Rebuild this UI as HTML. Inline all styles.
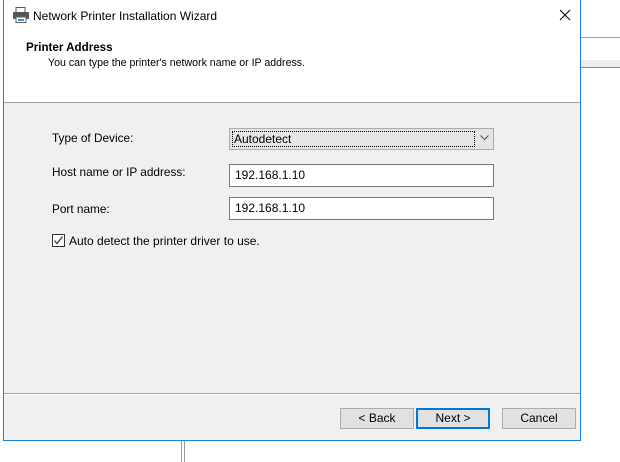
<!DOCTYPE html>
<html><head><meta charset="utf-8"><style>
*{margin:0;padding:0;box-sizing:border-box}
body{width:620px;height:462px;background:#fff;position:relative;overflow:hidden;font-family:"Liberation Sans",sans-serif;font-size:12px;color:#000}
.a{position:absolute}
.win{left:3px;top:0;width:578px;height:441px;border:1px solid #1883d7;border-top:none;background:#f0f0f0}
.btn{position:absolute;top:408px;width:74px;height:21px;background:#e1e1e1;border:1px solid #adadad;text-align:center;line-height:19px;font-size:12px}
.inp{position:absolute;left:229px;width:265px;height:23px;background:#fff;border:1px solid #7a7a7a;padding-left:5px;line-height:21px}
</style></head><body>
<div class="a" style="left:581px;top:37px;width:39px;height:1px;background:#a0a0a0"></div>
<div class="a" style="left:581px;top:60px;width:39px;height:7px;background:#eee"></div>
<div class="a" style="left:581px;top:67px;width:39px;height:1px;background:#888"></div>
<div class="a" style="left:181px;top:441px;width:4px;height:21px;border-left:1px solid #999;border-right:1px solid #999"></div>
<div class="a win"></div>
<div class="a" style="left:4px;top:0;width:576px;height:102px;background:#fff"></div>
<div class="a" style="left:4px;top:102px;width:576px;height:1px;background:#a0a0a0"></div>
<svg class="a" style="left:12px;top:7px" width="18" height="16" viewBox="0 0 18 16">
<rect x="4" y="0.5" width="9" height="5" fill="#fff" stroke="#555"/>
<rect x="1" y="5" width="16" height="7" rx="1" fill="#555"/>
<rect x="4" y="10" width="10" height="5.5" fill="#fff" stroke="#666"/>
<rect x="6" y="12" width="6" height="2" fill="#2a9ad9"/>
</svg>
<div class="a" style="left:33px;top:9px;font-size:12px">Network Printer Installation Wizard</div>
<svg class="a" style="left:559px;top:9px" width="12" height="12"><path d="M1 1L11 11M11 1L1 11" stroke="#000" stroke-width="1"/></svg>
<div class="a" style="left:26px;top:41px;font-weight:bold;font-size:11.6px">Printer Address</div>
<div class="a" style="left:48px;top:57px;font-size:10.6px">You can type the printer's network name or IP address.</div>
<div class="a" style="left:52px;top:131px;font-size:11.8px">Type of Device:</div>
<div class="a" style="left:52px;top:165px;font-size:11.8px">Host name or IP address:</div>
<div class="a" style="left:52px;top:202px;font-size:11.8px">Port name:</div>
<div class="a" style="left:229px;top:128px;width:265px;height:22px;background:#e5e5e5;border:1px solid #acacac"></div>
<div class="a" style="left:232px;top:131px;width:243px;height:16px;border:1px dotted #000;padding-left:1px;line-height:14px">Autodetect</div>
<svg class="a" style="left:480px;top:135px" width="9" height="6"><path d="M0.5 0.5L4.5 4.5L8.5 0.5" stroke="#555" fill="none"/></svg>
<div class="inp" style="top:164px">192.168.1.10</div>
<div class="inp" style="top:197px">192.168.1.10</div>
<div class="a" style="left:52px;top:234px;width:13px;height:13px;background:#fff;border:1px solid #333"></div>
<svg class="a" style="left:53px;top:235px" width="11" height="11"><path d="M1.5 5.5L4 8.5L9.5 1.5" stroke="#333" fill="none" stroke-width="1.2"/></svg>
<div class="a" style="left:69px;top:234px">Auto detect the printer driver to use.</div>
<div class="a" style="left:4px;top:393px;width:576px;height:1px;background:#a0a0a0"></div>
<div class="a" style="left:4px;top:394px;width:576px;height:1px;background:#fff"></div>
<div class="btn" style="left:340px">&lt; Back</div>
<div class="btn" style="left:416px;border:2px solid #0078d7;line-height:17px">Next &gt;</div>
<div class="btn" style="left:502px">Cancel</div>
</body></html>
